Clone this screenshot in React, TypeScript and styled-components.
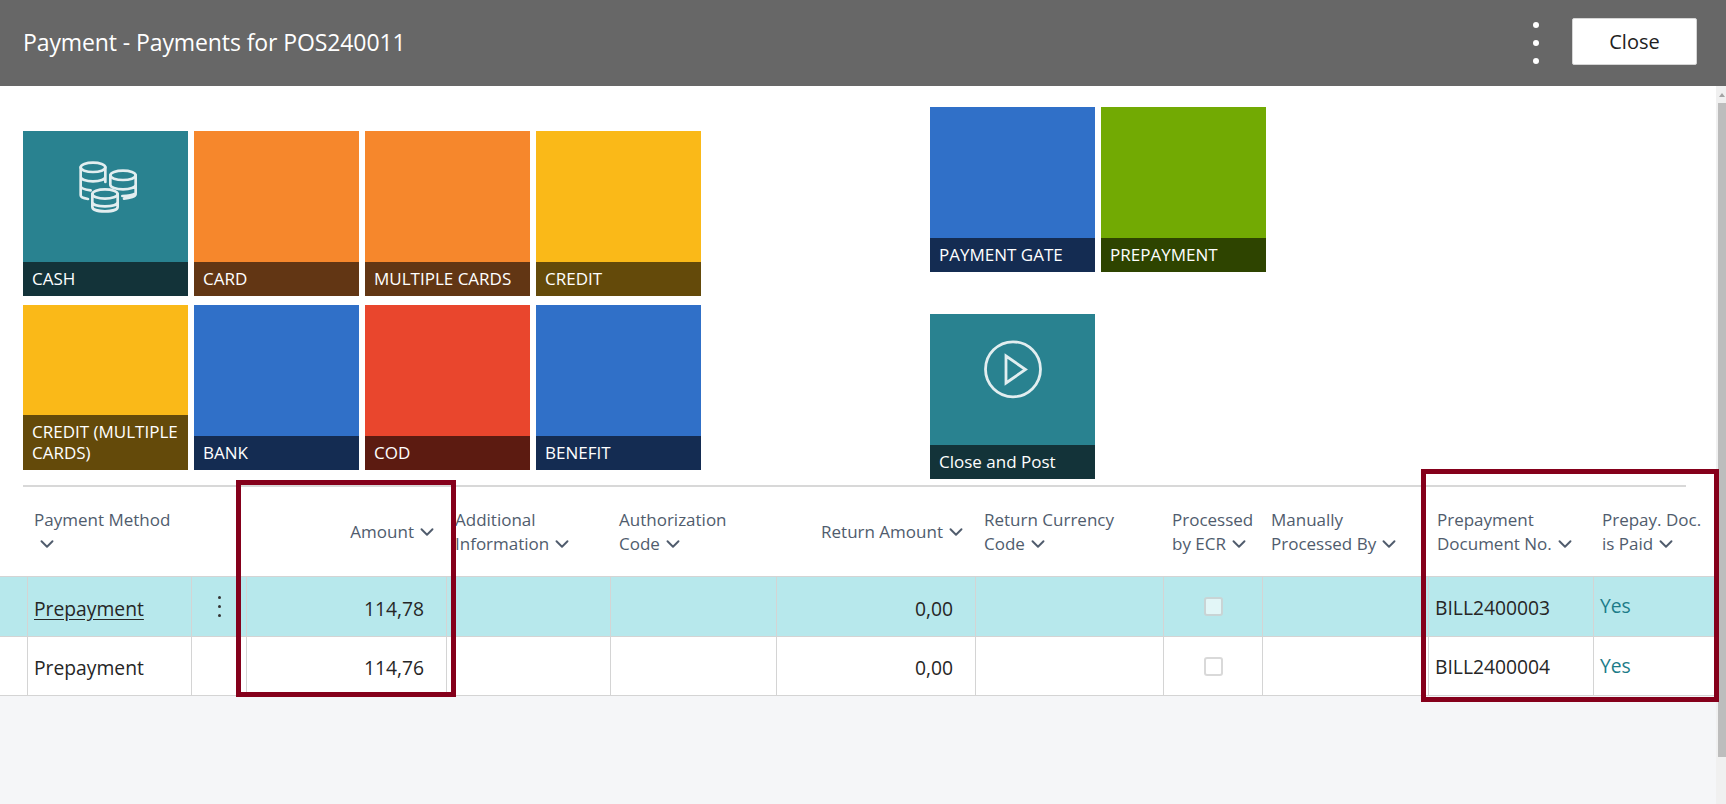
import React from 'react';
import styled, { createGlobalStyle } from 'styled-components';
import { ChevronDown } from 'lucide-react';

const GlobalStyle = createGlobalStyle`
  html, body {
    margin: 0;
    height: 100%;
    overflow: hidden;
    background: #fff;
    font-family: "Open Sans", "Noto Sans", sans-serif;
  }
  #root { height: 100%; }
`;

const Page = styled.div`
  width: 1726px;
  height: 804px;
  display: flex;
  flex-direction: column;
  overflow: hidden;
`;

const TitleBar = styled.header`
  flex: 0 0 86px;
  display: flex;
  align-items: center;
  background: #676767;
  padding: 0 29px 0 23px;
`;

const Title = styled.h1`
  flex: 1;
  margin: 0 0 2px;
  color: #fff;
  font-size: 23px;
  font-weight: 400;
  letter-spacing: -0.1px;
`;

const MoreDots = styled.span`
  display: flex;
  flex-direction: column;
  gap: 12px;
  margin-right: 33px;
  > i {
    width: 6px;
    height: 6px;
    border-radius: 50%;
    background: #fff;
  }
`;

const CloseButton = styled.button`
  width: 125px;
  height: 47px;
  margin-bottom: 4px;
  border: 1px solid #d6d6d6;
  border-radius: 2px;
  background: #fff;
  color: #212121;
  font: 400 20px "Open Sans", sans-serif;
`;

const Body = styled.div`
  flex: 1;
  display: flex;
  min-height: 0;
`;

const Main = styled.main`
  flex: 1;
  display: flex;
  flex-direction: column;
  min-width: 0;
  background: #f5f6f8;
`;

const ScrollBar = styled.div`
  flex: 0 0 10px;
  box-sizing: border-box;
  display: flex;
  flex-direction: column;
  align-items: flex-end;
  background: #f0f0f0;
`;

const ScrollArrow = styled.span`
  width: 0;
  height: 0;
  margin: 7px 1px 6px 0;
  border-left: 3px solid transparent;
  border-right: 3px solid transparent;
  border-bottom: 4px solid #a3a3a3;
`;

const ScrollThumb = styled.span`
  width: 8px;
  height: 654px;
  background: #bdbdbd;
`;

const Tiles = styled.section`
  flex: 0 0 399px;
  display: flex;
  background: #fff;
  padding-left: 23px;
`;

const TileColumnLeft = styled.div`
  flex: 0 0 907px;
  display: grid;
  grid-template-columns: repeat(4, 165px);
  grid-auto-rows: 165px;
  gap: 9px 6px;
  padding-top: 45px;
`;

const TileColumnRight = styled.div`
  display: flex;
  flex-direction: column;
  gap: 42px;
  padding-top: 21px;
`;

const TileRow = styled.div`
  display: flex;
  gap: 6px;
`;

const Tile = styled.button<{ $bg: string }>`
  width: 165px;
  height: 165px;
  padding: 0;
  border: 0;
  display: flex;
  flex-direction: column;
  justify-content: space-between;
  align-items: center;
  background: ${(p) => p.$bg};
  font-family: inherit;
`;

const TileLabel = styled.span<{ $bg: string }>`
  align-self: stretch;
  margin-top: auto;
  padding: 5.5px 9px 7.5px;
  background: ${(p) => p.$bg};
  color: #fff;
  font-size: 17px;
  line-height: 21px;
  text-align: left;
`;

const TileIcon = styled.svg`
  width: 90px;
  height: 90px;
  margin-top: 9px;
  fill: none;
  stroke: #e2eef0;
`;

const Grid = styled.div`
  position: relative;
  background: #fff;
`;

const COLUMNS = '27px 164px 55px 200px 164px 166px 199px 188px 99px 166px 165px 123px';

const Divider = styled.div`
  height: 2px;
  margin: 0 30px 0 23px;
  background: #d8d8d8;
`;

const HeadRow = styled.div`
  display: grid;
  grid-template-columns: ${COLUMNS};
  height: 89px;
`;

const HeadCell = styled.div<{ $right?: boolean; $flush?: boolean }>`
  align-self: center;
  padding: 0 ${(p) => (p.$right ? '13px' : '4px')} 0 ${(p) => (p.$flush ? '7px' : '9px')};
  color: #505c6d;
  font-size: 17px;
  line-height: 24px;
  white-space: nowrap;
  text-align: ${(p) => (p.$right ? 'right' : 'left')};
`;

const Chevron = styled(ChevronDown)`
  width: 22px;
  height: 22px;
  margin: -4px -5px -4px 2px;
  vertical-align: -1.5px;
  color: #505c6d;
`;

const Rows = styled.div``;

const Row = styled.div<{ $selected?: boolean }>`
  display: grid;
  grid-template-columns: ${COLUMNS};
  height: 60px;
  box-sizing: border-box;
  border-top: 1px solid #d4d4d4;
  background: ${(p) => (p.$selected ? '#b7e8ec' : '#fff')};
  &:last-child {
    border-bottom: 1px solid #d4d4d4;
  }
`;

const Cell = styled.div<{ $right?: boolean; $center?: boolean }>`
  display: flex;
  align-items: center;
  justify-content: ${(p) => (p.$right ? 'flex-end' : p.$center ? 'center' : 'flex-start')};
  padding: 3px ${(p) => (p.$right ? '22px' : '0')} 0 ${(p) => (p.$right || p.$center ? '0' : '6px')};
  border-left: 1px solid #d4d4d4;
  color: #262626;
  font-size: 19.3px;
`;

const Gutter = styled.div``;

const Link = styled.a`
  color: #262626;
  text-decoration: underline;
  text-underline-offset: 3px;
`;

const Kebab = styled.span`
  display: flex;
  flex-direction: column;
  gap: 6px;
  margin-bottom: 3px;
  > i {
    width: 3px;
    height: 3px;
    border-radius: 50%;
    background: #333;
  }
`;

const Check = styled.span`
  width: 19px;
  height: 19px;
  margin-bottom: 3px;
  box-sizing: border-box;
  border: 2px solid rgba(170, 170, 170, 0.45);
  border-radius: 3px;
  background: rgba(255, 255, 255, 0.6);
`;

const DocNo = styled.span`
  margin-bottom: 2px;
`;

const YesText = styled.span`
  margin-bottom: 5px;
  color: #1c7c89;
`;

const Callout = styled.div<{ $left: number; $top: number; $w: number; $h: number }>`
  position: absolute;
  left: ${(p) => p.$left}px;
  top: ${(p) => p.$top}px;
  width: ${(p) => p.$w}px;
  height: ${(p) => p.$h}px;
  box-sizing: border-box;
  border: 5px solid #85001b;
  pointer-events: none;
`;

const CoinsIcon = () => (
  <TileIcon viewBox="0 0 270 270" strokeWidth={8} strokeLinecap="round">
    <ellipse cx="96" cy="82" rx="37" ry="14" />
    <path d="M59 82v84c0 5 8 9 22 11M133 82v44M59 110c0 8 16 14 37 14s37-6 37-14M59 138c0 6 12 11 30 13" />
    <ellipse cx="186" cy="106" rx="38" ry="14" />
    <path d="M148 106v28M224 106v56c0 7-16 13-35 14M148 134c0 8 17 14 38 14s38-6 38-14M224 160c-6 4-20 8-40 8" />
    <ellipse cx="132" cy="162" rx="38" ry="14" />
    <path d="M94 162v38c0 9 17 14 38 14s38-5 38-14v-38M94 186c0 8 17 13 38 13s38-5 38-13" />
  </TileIcon>
);

const PlayIcon = () => (
  <TileIcon viewBox="0 0 90 90" strokeWidth={2.8}>
    <circle cx="45" cy="46.3" r="27.5" />
    <path d="M38 33l0 27 19.5-13.5z" strokeLinejoin="miter" />
  </TileIcon>
);

type TileData = { label: string; bg: string; dark: string; icon?: React.ReactNode };

const TEAL = ['#298290', '#133339'];
const ORANGE = ['#f6872c', '#623614'];
const YELLOW = ['#fab918', '#644a0a'];
const BLUE = ['#3070c8', '#142c52'];
const RED = ['#e9462d', '#5c1b11'];
const GREEN = ['#72aa03', '#2e4400'];

const tile = (label: string, c: string[], icon?: React.ReactNode): TileData => ({
  label,
  bg: c[0],
  dark: c[1],
  icon,
});

const methodTiles = [
  tile('CASH', TEAL, <CoinsIcon />),
  tile('CARD', ORANGE),
  tile('MULTIPLE CARDS', ORANGE),
  tile('CREDIT', YELLOW),
  tile('CREDIT (MULTIPLE CARDS)', YELLOW),
  tile('BANK', BLUE),
  tile('COD', RED),
  tile('BENEFIT', BLUE),
];

const gateTiles = [tile('PAYMENT GATE', BLUE), tile('PREPAYMENT', GREEN)];
const postTile = tile('Close and Post', TEAL, <PlayIcon />);

const PaymentTile = ({ t }: { t: TileData }) => (
  <Tile $bg={t.bg}>
    {t.icon}
    <TileLabel $bg={t.dark}>{t.label}</TileLabel>
  </Tile>
);

const Head = ({ first, last, right, flush }: { first?: string; last: string; right?: boolean; flush?: boolean }) => (
  <HeadCell $right={right} $flush={flush}>
    {first}
    {first && <br />}
    {last}
    <Chevron strokeWidth={2.1} />
  </HeadCell>
);

const rows = [
  { amount: '114,78', doc: 'BILL2400003', selected: true },
  { amount: '114,76', doc: 'BILL2400004', selected: false },
];

export default function App() {
  return (
    <Page>
      <GlobalStyle />
      <TitleBar>
        <Title>Payment - Payments for POS240011</Title>
        <MoreDots>
          <i />
          <i />
          <i />
        </MoreDots>
        <CloseButton>Close</CloseButton>
      </TitleBar>
      <Body>
        <Main>
          <Tiles>
            <TileColumnLeft>
              {methodTiles.map((t) => (
                <PaymentTile key={t.label} t={t} />
              ))}
            </TileColumnLeft>
            <TileColumnRight>
              <TileRow>
                {gateTiles.map((t) => (
                  <PaymentTile key={t.label} t={t} />
                ))}
              </TileRow>
              <TileRow>
                <PaymentTile t={postTile} />
              </TileRow>
            </TileColumnRight>
          </Tiles>
          <Grid>
            <Divider />
            <HeadRow>
              <div />
              <Head first="Payment Method" last="" flush />
              <div />
              <Head last="Amount" right />
              <Head first="Additional" last="Information" />
              <Head first="Authorization" last="Code" />
              <Head last="Return Amount" right />
              <Head first="Return Currency" last="Code" />
              <Head first="Processed" last="by ECR" />
              <Head first="Manually" last="Processed By" />
              <Head first="Prepayment" last="Document No." />
              <Head first="Prepay. Doc." last="is Paid" />
            </HeadRow>
            <Rows>
              {rows.map((r) => (
                <Row key={r.doc} $selected={r.selected}>
                  <Gutter />
                  <Cell>{r.selected ? <Link>Prepayment</Link> : 'Prepayment'}</Cell>
                  <Cell $center>
                    {r.selected && (
                      <Kebab>
                        <i />
                        <i />
                        <i />
                      </Kebab>
                    )}
                  </Cell>
                  <Cell $right>{r.amount}</Cell>
                  <Cell />
                  <Cell />
                  <Cell $right>0,00</Cell>
                  <Cell />
                  <Cell $center>
                    <Check />
                  </Cell>
                  <Cell />
                  <Cell>
                    <DocNo>{r.doc}</DocNo>
                  </Cell>
                  <Cell>
                    <YesText>Yes</YesText>
                  </Cell>
                </Row>
              ))}
            </Rows>
            <Callout $left={236} $top={-5} $w={220} $h={217} />
            <Callout $left={1421} $top={-16} $w={298} $h={233} />
          </Grid>
        </Main>
        <ScrollBar>
          <ScrollArrow />
          <ScrollThumb />
        </ScrollBar>
      </Body>
    </Page>
  );
}
